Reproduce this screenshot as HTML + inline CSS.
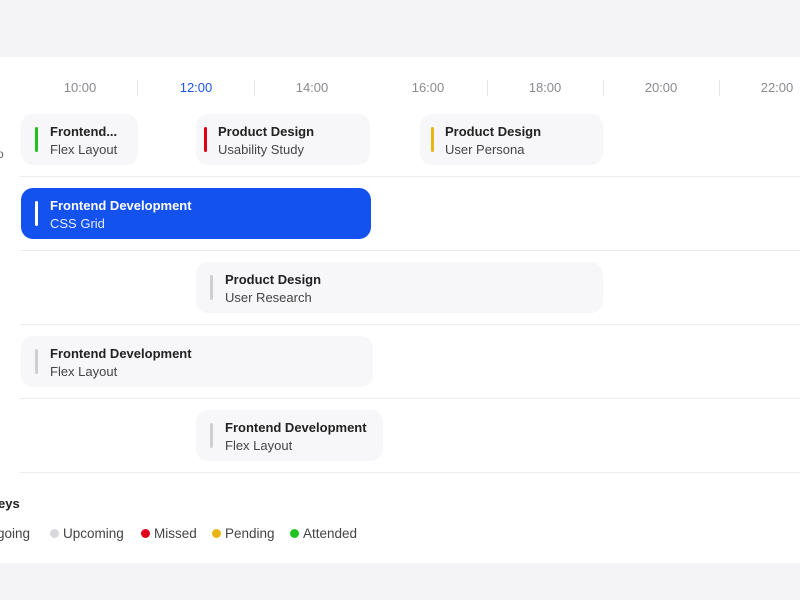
<!DOCTYPE html>
<html><head><style>
*{margin:0;padding:0;box-sizing:border-box}
body{width:800px;height:600px;background:#f4f3f6;font-family:"Liberation Sans",sans-serif;position:relative;overflow:hidden}
.panel{position:absolute;left:0;top:57px;width:800px;height:506px;background:#fff}
.t{position:absolute;top:80px;font-size:13px;color:#8a8a90;width:60px;text-align:center}
.sep{position:absolute;top:80px;width:1px;height:16px;background:#e6e6ea}
.line{position:absolute;left:20px;right:0;height:1px;background:#ececef}
.card{position:absolute;height:51px;background:#f7f7f9;border-radius:12px;padding:9px 0 0 29px}
.card b{display:block;font-size:13px;color:#222;line-height:18px}
.card span{display:block;font-size:13px;color:#444;line-height:17px}
.bar{position:absolute;left:14px;top:13px;width:3px;height:25px;border-radius:2px}
.leg{position:absolute;top:526px;font-size:13.5px;color:#444}
.dot{display:inline-block;width:9px;height:9px;border-radius:50%;margin-right:4px;vertical-align:0px}
</style></head><body>
<div class="panel"></div>
<div class="t" style="left:50px">10:00</div>
<div class="t" style="left:166px;color:#1a56f0">12:00</div>
<div class="t" style="left:282px">14:00</div>
<div class="t" style="left:398px">16:00</div>
<div class="t" style="left:515px">18:00</div>
<div class="t" style="left:631px">20:00</div>
<div class="t" style="left:747px">22:00</div>
<div class="sep" style="left:137px"></div><div class="sep" style="left:254px"></div><div class="sep" style="left:487px"></div><div class="sep" style="left:603px"></div><div class="sep" style="left:719px"></div>
<div class="line" style="top:176px"></div><div class="line" style="top:250px"></div><div class="line" style="top:324px"></div><div class="line" style="top:398px"></div><div class="line" style="top:472px"></div>
<div style="position:absolute;left:-3px;top:147px;font-size:12px;color:#666">o</div>
<div style="position:absolute;left:-3px;top:292px;font-size:12px;color:#666">l</div>
<div class="card" style="left:21px;top:114px;width:117px"><div class="bar" style="background:#1fc21f"></div><b>Frontend...</b><span>Flex Layout</span></div>
<div class="card" style="left:196px;top:114px;width:174px"><div class="bar" style="background:#e0001a;left:8px"></div><b style="margin-left:-7px">Product Design</b><span style="margin-left:-7px">Usability Study</span></div>
<div class="card" style="left:420px;top:114px;width:183px"><div class="bar" style="background:#e8b514;left:11px"></div><b style="margin-left:-4px">Product Design</b><span style="margin-left:-4px">User Persona</span></div>
<div class="card" style="left:21px;top:188px;width:350px;background:#1352ef"><div class="bar" style="background:#fff"></div><b style="color:#fff">Frontend Development</b><span style="color:#e6ecff">CSS Grid</span></div>
<div class="card" style="left:196px;top:262px;width:407px"><div class="bar" style="background:#d0d0d4"></div><b>Product Design</b><span>User Research</span></div>
<div class="card" style="left:21px;top:336px;width:352px"><div class="bar" style="background:#d0d0d4"></div><b>Frontend Development</b><span>Flex Layout</span></div>
<div class="card" style="left:196px;top:410px;width:187px"><div class="bar" style="background:#d0d0d4"></div><b>Frontend Development</b><span>Flex Layout</span></div>
<div style="position:absolute;left:-2px;top:496px;font-size:13px;font-weight:bold;color:#222">eys</div>
<div class="leg" style="left:-3px">going</div>
<div class="leg" style="left:50px"><span class="dot" style="background:#d8d8dc"></span>Upcoming</div>
<div class="leg" style="left:141px"><span class="dot" style="background:#e0001a"></span>Missed</div>
<div class="leg" style="left:212px"><span class="dot" style="background:#e8b514"></span>Pending</div>
<div class="leg" style="left:290px"><span class="dot" style="background:#1fc21f"></span>Attended</div>
</body></html>
